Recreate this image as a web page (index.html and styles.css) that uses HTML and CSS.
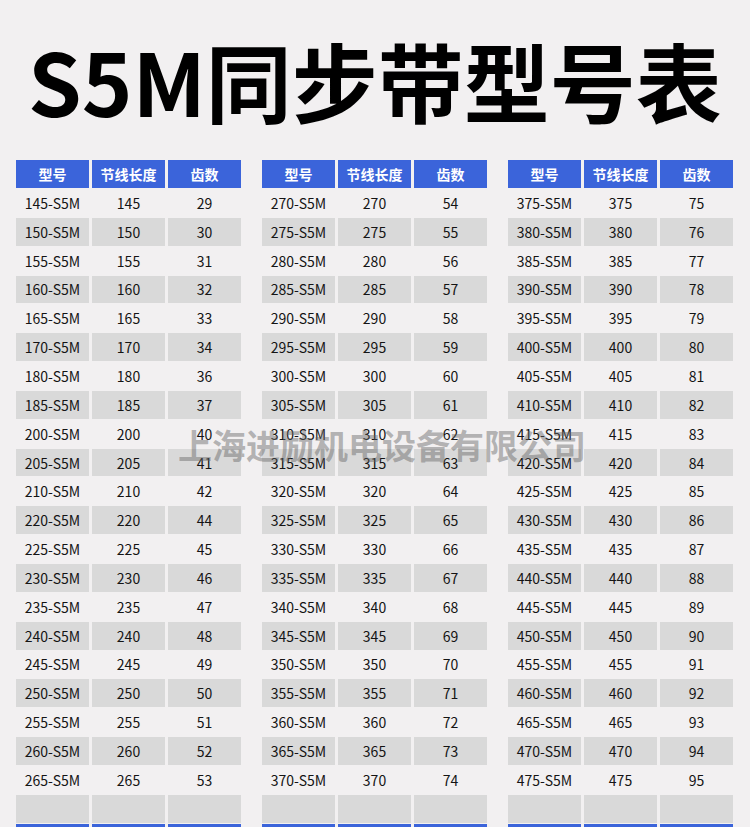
FILE: index.html
```html
<!DOCTYPE html>
<html lang="zh-CN">
<head>
<meta charset="utf-8">
<title>S5M同步带型号表</title>
<link rel="stylesheet" href="styles.css">
</head>
<body>
<div class="page">
  <h1 class="title">S5M同步带型号表</h1>
  <div class="tables">
    <div class="table">
      <div class="row head"><div>型号</div><div>节线长度</div><div>齿数</div></div>
      <div class="row"><div>145-S5M</div><div>145</div><div>29</div></div>
      <div class="row"><div>150-S5M</div><div>150</div><div>30</div></div>
      <div class="row"><div>155-S5M</div><div>155</div><div>31</div></div>
      <div class="row"><div>160-S5M</div><div>160</div><div>32</div></div>
      <div class="row"><div>165-S5M</div><div>165</div><div>33</div></div>
      <div class="row"><div>170-S5M</div><div>170</div><div>34</div></div>
      <div class="row"><div>180-S5M</div><div>180</div><div>36</div></div>
      <div class="row"><div>185-S5M</div><div>185</div><div>37</div></div>
      <div class="row"><div>200-S5M</div><div>200</div><div>40</div></div>
      <div class="row"><div>205-S5M</div><div>205</div><div>41</div></div>
      <div class="row"><div>210-S5M</div><div>210</div><div>42</div></div>
      <div class="row"><div>220-S5M</div><div>220</div><div>44</div></div>
      <div class="row"><div>225-S5M</div><div>225</div><div>45</div></div>
      <div class="row"><div>230-S5M</div><div>230</div><div>46</div></div>
      <div class="row"><div>235-S5M</div><div>235</div><div>47</div></div>
      <div class="row"><div>240-S5M</div><div>240</div><div>48</div></div>
      <div class="row"><div>245-S5M</div><div>245</div><div>49</div></div>
      <div class="row"><div>250-S5M</div><div>250</div><div>50</div></div>
      <div class="row"><div>255-S5M</div><div>255</div><div>51</div></div>
      <div class="row"><div>260-S5M</div><div>260</div><div>52</div></div>
      <div class="row"><div>265-S5M</div><div>265</div><div>53</div></div>
      <div class="row"><div></div><div></div><div></div></div>
      <div class="row head"><div></div><div></div><div></div></div>
    </div>
    <div class="table">
      <div class="row head"><div>型号</div><div>节线长度</div><div>齿数</div></div>
      <div class="row"><div>270-S5M</div><div>270</div><div>54</div></div>
      <div class="row"><div>275-S5M</div><div>275</div><div>55</div></div>
      <div class="row"><div>280-S5M</div><div>280</div><div>56</div></div>
      <div class="row"><div>285-S5M</div><div>285</div><div>57</div></div>
      <div class="row"><div>290-S5M</div><div>290</div><div>58</div></div>
      <div class="row"><div>295-S5M</div><div>295</div><div>59</div></div>
      <div class="row"><div>300-S5M</div><div>300</div><div>60</div></div>
      <div class="row"><div>305-S5M</div><div>305</div><div>61</div></div>
      <div class="row"><div>310-S5M</div><div>310</div><div>62</div></div>
      <div class="row"><div>315-S5M</div><div>315</div><div>63</div></div>
      <div class="row"><div>320-S5M</div><div>320</div><div>64</div></div>
      <div class="row"><div>325-S5M</div><div>325</div><div>65</div></div>
      <div class="row"><div>330-S5M</div><div>330</div><div>66</div></div>
      <div class="row"><div>335-S5M</div><div>335</div><div>67</div></div>
      <div class="row"><div>340-S5M</div><div>340</div><div>68</div></div>
      <div class="row"><div>345-S5M</div><div>345</div><div>69</div></div>
      <div class="row"><div>350-S5M</div><div>350</div><div>70</div></div>
      <div class="row"><div>355-S5M</div><div>355</div><div>71</div></div>
      <div class="row"><div>360-S5M</div><div>360</div><div>72</div></div>
      <div class="row"><div>365-S5M</div><div>365</div><div>73</div></div>
      <div class="row"><div>370-S5M</div><div>370</div><div>74</div></div>
      <div class="row"><div></div><div></div><div></div></div>
      <div class="row head"><div></div><div></div><div></div></div>
    </div>
    <div class="table">
      <div class="row head"><div>型号</div><div>节线长度</div><div>齿数</div></div>
      <div class="row"><div>375-S5M</div><div>375</div><div>75</div></div>
      <div class="row"><div>380-S5M</div><div>380</div><div>76</div></div>
      <div class="row"><div>385-S5M</div><div>385</div><div>77</div></div>
      <div class="row"><div>390-S5M</div><div>390</div><div>78</div></div>
      <div class="row"><div>395-S5M</div><div>395</div><div>79</div></div>
      <div class="row"><div>400-S5M</div><div>400</div><div>80</div></div>
      <div class="row"><div>405-S5M</div><div>405</div><div>81</div></div>
      <div class="row"><div>410-S5M</div><div>410</div><div>82</div></div>
      <div class="row"><div>415-S5M</div><div>415</div><div>83</div></div>
      <div class="row"><div>420-S5M</div><div>420</div><div>84</div></div>
      <div class="row"><div>425-S5M</div><div>425</div><div>85</div></div>
      <div class="row"><div>430-S5M</div><div>430</div><div>86</div></div>
      <div class="row"><div>435-S5M</div><div>435</div><div>87</div></div>
      <div class="row"><div>440-S5M</div><div>440</div><div>88</div></div>
      <div class="row"><div>445-S5M</div><div>445</div><div>89</div></div>
      <div class="row"><div>450-S5M</div><div>450</div><div>90</div></div>
      <div class="row"><div>455-S5M</div><div>455</div><div>91</div></div>
      <div class="row"><div>460-S5M</div><div>460</div><div>92</div></div>
      <div class="row"><div>465-S5M</div><div>465</div><div>93</div></div>
      <div class="row"><div>470-S5M</div><div>470</div><div>94</div></div>
      <div class="row"><div>475-S5M</div><div>475</div><div>95</div></div>
      <div class="row"><div></div><div></div><div></div></div>
      <div class="row head"><div></div><div></div><div></div></div>
    </div>
  </div>
  <div class="watermark">上海进励机电设备有限公司</div>
</div>
</body>
</html>
```

FILE: styles.css
```css
html, body {
  margin: 0;
  padding: 0;
  overflow: hidden;
  background: #f2f0f1;
}
.page {
  position: relative;
  width: 750px;
  height: 827px;
  overflow: hidden;
  font-family: "Noto Sans CJK SC", "Noto Sans", sans-serif;
  color: #141414;
}
.title {
  margin: 0;
  height: 160px;
  display: flex;
  align-items: center;
  justify-content: center;
  font-size: 86px;
  font-weight: 700;
  line-height: 1;
  color: #000;
  letter-spacing: 0;
  box-sizing: border-box;
}
.tables {
  display: flex;
  gap: 21px;
  padding: 0 16px;
}
.table {
  width: 225px;
  display: flex;
  flex-direction: column;
  gap: 1px;
}
.row {
  display: grid;
  grid-template-columns: 73px 73px 73px;
  column-gap: 3px;
  height: 27.85px;
}
.row > div {
  display: flex;
  align-items: center;
  justify-content: center;
  font-size: 14px;
}
.row:nth-child(odd) > div {
  background: #d9d9d9;
}
.row.head {
  height: 28px;
  margin-bottom: -1px;
}
.row.head > div {
  background: #3b64da;
  color: #fff;
  font-weight: 700;
  font-size: 14px;
}
.row.head + .row {
  margin-top: 1px;
}
.watermark {
  position: absolute;
  left: 178px;
  top: 425px;
  font-size: 34px;
  font-weight: 700;
  line-height: 40px;
  color: rgba(100, 100, 100, 0.45);
  white-space: nowrap;
}
```
